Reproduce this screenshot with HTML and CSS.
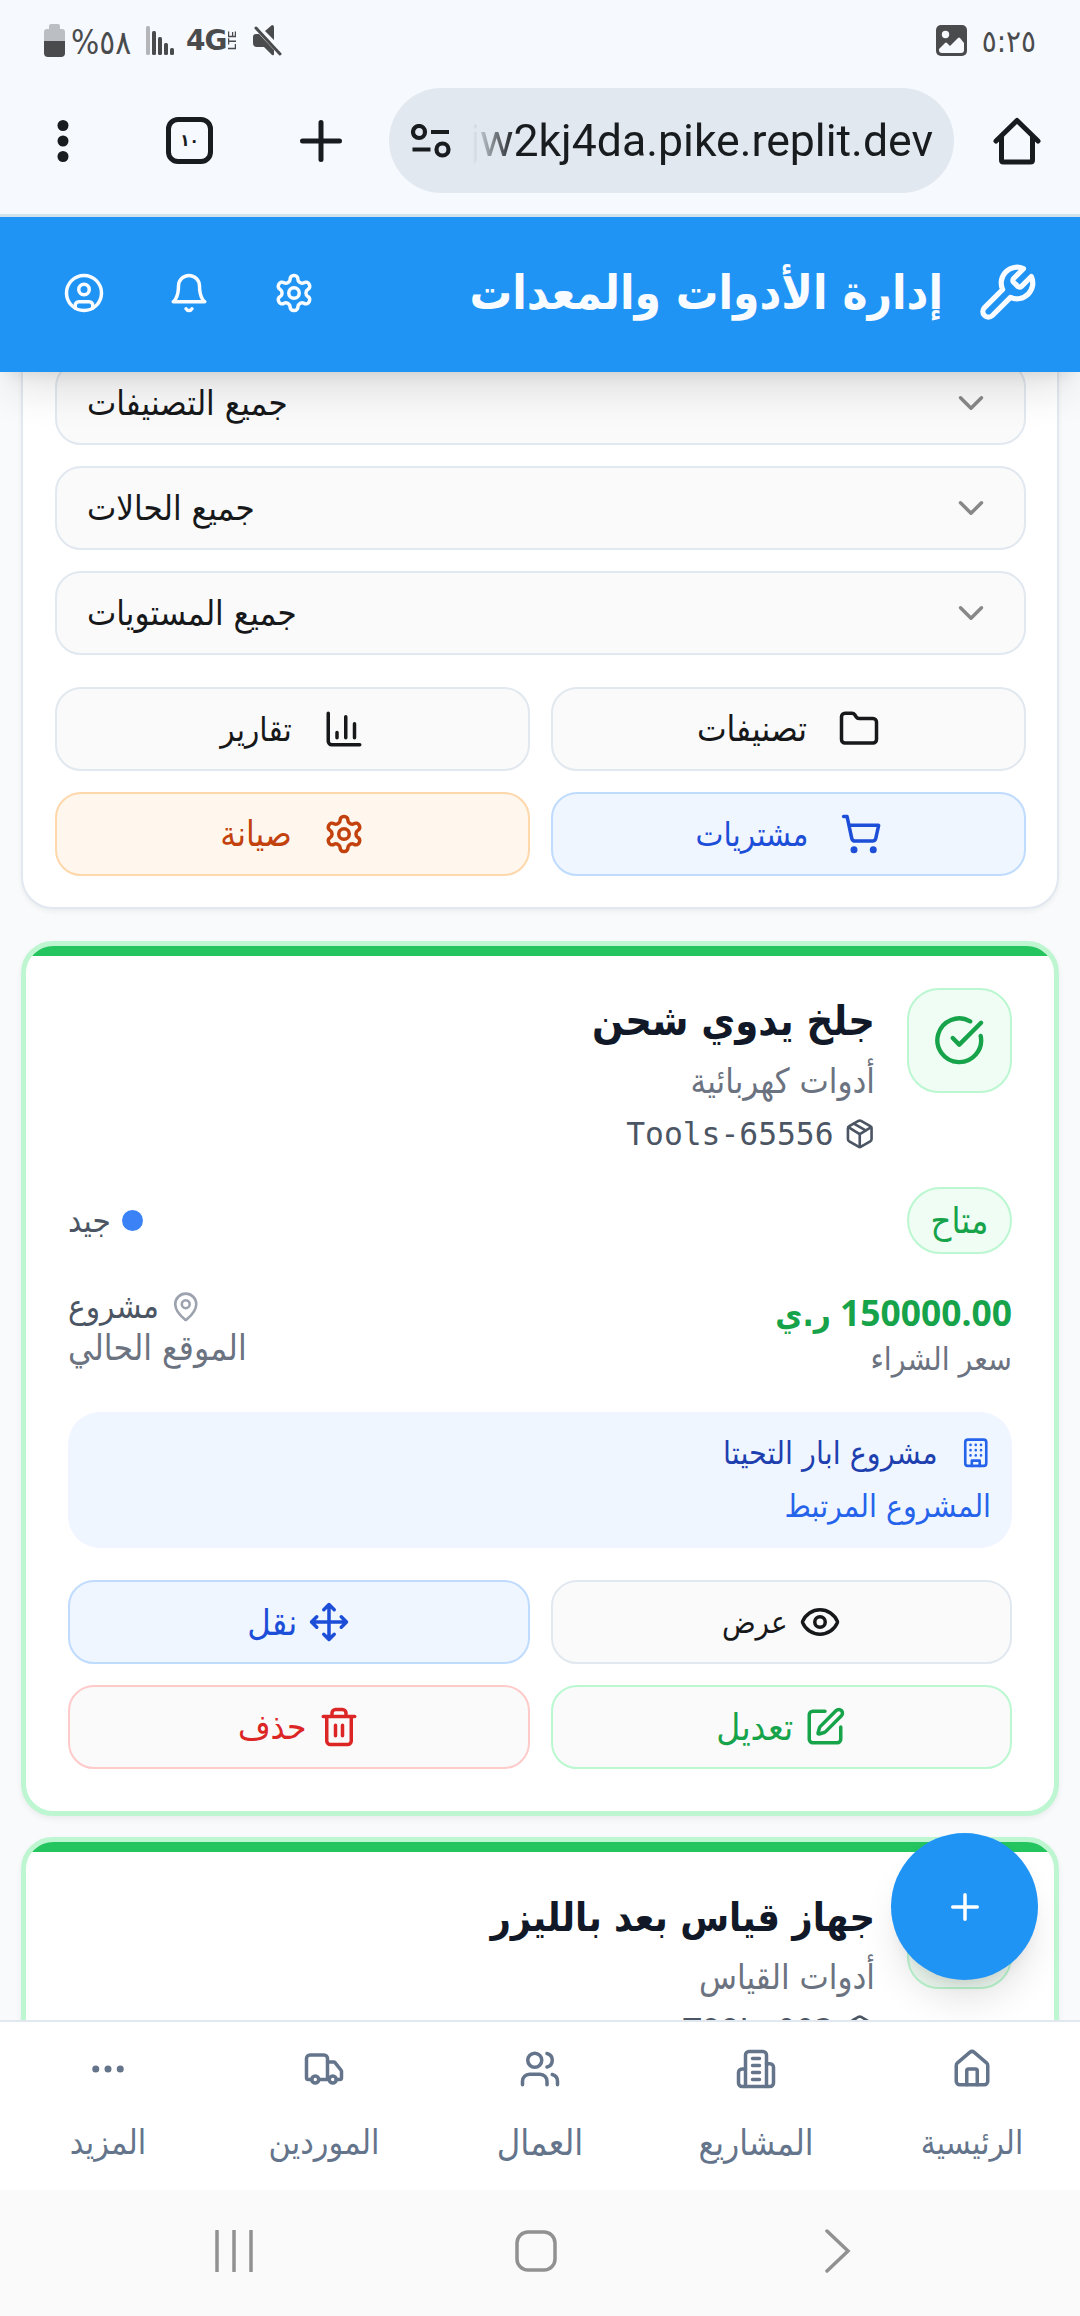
FILE: index.html
```html
<!DOCTYPE html>
<html lang="ar" dir="rtl">
<head>
<meta charset="utf-8">
<title>إدارة الأدوات والمعدات</title>
<link rel="stylesheet" href="styles.css">
</head>
<body>
<svg class="sprite" aria-hidden="true">
  <symbol id="wrench" viewBox="0 0 24 24"><path d="M14.7 6.3a1 1 0 0 0 0 1.4l1.6 1.6a1 1 0 0 0 1.4 0l3.77-3.77a6 6 0 0 1-7.94 7.94l-6.91 6.91a2.12 2.12 0 0 1-3-3l6.91-6.91a6 6 0 0 1 7.94-7.94l-3.76 3.76z"/></symbol>
  <symbol id="settings" viewBox="0 0 24 24"><path d="M12.22 2h-.44a2 2 0 0 0-2 2v.18a2 2 0 0 1-1 1.73l-.43.25a2 2 0 0 1-2 0l-.15-.08a2 2 0 0 0-2.73.73l-.22.38a2 2 0 0 0 .73 2.73l.15.1a2 2 0 0 1 1 1.72v.51a2 2 0 0 1-1 1.74l-.15.09a2 2 0 0 0-.73 2.73l.22.38a2 2 0 0 0 2.73.73l.15-.08a2 2 0 0 1 2 0l.43.25a2 2 0 0 1 1 1.73V20a2 2 0 0 0 2 2h.44a2 2 0 0 0 2-2v-.18a2 2 0 0 1 1-1.73l.43-.25a2 2 0 0 1 2 0l.15.08a2 2 0 0 0 2.73-.73l.22-.39a2 2 0 0 0-.73-2.73l-.15-.08a2 2 0 0 1-1-1.74v-.5a2 2 0 0 1 1-1.74l.15-.09a2 2 0 0 0 .73-2.73l-.22-.38a2 2 0 0 0-2.73-.73l-.15.08a2 2 0 0 1-2 0l-.43-.25a2 2 0 0 1-1-1.73V4a2 2 0 0 0-2-2z"/><circle cx="12" cy="12" r="3"/></symbol>
  <symbol id="bell" viewBox="0 0 24 24"><path d="M6 8a6 6 0 0 1 12 0c0 7 3 9 3 9H3s3-2 3-9"/><path d="M10.3 21a1.94 1.94 0 0 0 3.4 0"/></symbol>
  <symbol id="user" viewBox="0 0 24 24"><circle cx="12" cy="12" r="10"/><circle cx="12" cy="10" r="3"/><path d="M7 20.662V19a2 2 0 0 1 2-2h6a2 2 0 0 1 2 2v1.662"/></symbol>
  <symbol id="chevron" viewBox="0 0 24 24"><path d="m6 9 6 6 6-6"/></symbol>
  <symbol id="folder" viewBox="0 0 24 24"><path d="M20 20a2 2 0 0 0 2-2V8a2 2 0 0 0-2-2h-7.9a2 2 0 0 1-1.69-.9L9.6 3.9A2 2 0 0 0 7.93 3H4a2 2 0 0 0-2 2v13a2 2 0 0 0 2 2Z"/></symbol>
  <symbol id="chart" viewBox="0 0 24 24"><path d="M3 3v16a2 2 0 0 0 2 2h16M18 17V9M13 17V5M8 17v-3"/></symbol>
  <symbol id="cart" viewBox="0 0 24 24"><circle cx="8" cy="21" r="1"/><circle cx="19" cy="21" r="1"/><path d="M2.05 2.05h2l2.66 12.42a2 2 0 0 0 2 1.58h9.78a2 2 0 0 0 1.95-1.57l1.65-7.43H5.12"/></symbol>
  <symbol id="check" viewBox="0 0 24 24"><path d="M21.801 10A10 10 0 1 1 17 3.335"/><path d="m9 11 3 3L22 4"/></symbol>
  <symbol id="package" viewBox="0 0 24 24"><path d="M11 21.73a2 2 0 0 0 2 0l7-4A2 2 0 0 0 21 16V8a2 2 0 0 0-1-1.73l-7-4a2 2 0 0 0-2 0l-7 4A2 2 0 0 0 3 8v8a2 2 0 0 0 1 1.73z"/><path d="M12 22V12"/><path d="m3.3 7 7.703 4.734a2 2 0 0 0 1.994 0L20.7 7"/><path d="m7.5 4.27 9 5.15"/></symbol>
  <symbol id="pin" viewBox="0 0 24 24"><path d="M20 10c0 4.993-5.539 10.193-7.399 11.799a1 1 0 0 1-1.202 0C9.539 20.193 4 14.993 4 10a8 8 0 0 1 16 0"/><circle cx="12" cy="10" r="3"/></symbol>
  <symbol id="tower" viewBox="0 0 24 24"><rect width="16" height="20" x="4" y="2" rx="2"/><path d="M9 22v-4h6v4M8 6h.01M16 6h.01M12 6h.01M12 10h.01M12 14h.01M16 10h.01M16 14h.01M8 10h.01M8 14h.01"/></symbol>
  <symbol id="eye" viewBox="0 0 24 24"><path d="M2.062 12.348a1 1 0 0 1 0-.696 10.75 10.75 0 0 1 19.876 0 1 1 0 0 1 0 .696 10.75 10.75 0 0 1-19.876 0"/><circle cx="12" cy="12" r="3"/></symbol>
  <symbol id="edit" viewBox="0 0 24 24"><path d="M12 3H5a2 2 0 0 0-2 2v14a2 2 0 0 0 2 2h14a2 2 0 0 0 2-2v-7"/><path d="M18.375 2.625a1 1 0 0 1 3 3l-9.013 9.014a2 2 0 0 1-.853.505l-2.873.84a.5.5 0 0 1-.62-.62l.84-2.873a2 2 0 0 1 .506-.852z"/></symbol>
  <symbol id="move" viewBox="0 0 24 24"><path d="M12 2v20M2 12h20M15 19l-3 3-3-3M19 9l3 3-3 3M5 9l-3 3 3 3M9 5l3-3 3 3"/></symbol>
  <symbol id="trash" viewBox="0 0 24 24"><path d="M3 6h18M19 6v14c0 1-1 2-2 2H7c-1 0-2-1-2-2V6M8 6V4c0-1 1-2 2-2h4c1 0 2 1 2 2v2M10 11v6M14 11v6"/></symbol>
  <symbol id="house" viewBox="0 0 24 24"><path d="M15 21v-8a1 1 0 0 0-1-1h-4a1 1 0 0 0-1 1v8"/><path d="M3 10a2 2 0 0 1 .709-1.528l7-5.999a2 2 0 0 1 2.582 0l7 5.999A2 2 0 0 1 21 10v9a2 2 0 0 1-2 2H5a2 2 0 0 1-2-2z"/></symbol>
  <symbol id="building" viewBox="0 0 24 24"><path d="M6 22V4a2 2 0 0 1 2-2h8a2 2 0 0 1 2 2v18Z"/><path d="M6 12H4a2 2 0 0 0-2 2v6a2 2 0 0 0 2 2h2M18 9h2a2 2 0 0 1 2 2v9a2 2 0 0 1-2 2h-2M10 6h4M10 10h4M10 14h4M10 18h4"/></symbol>
  <symbol id="users" viewBox="0 0 24 24"><path d="M16 21v-2a4 4 0 0 0-4-4H6a4 4 0 0 0-4 4v2"/><circle cx="9" cy="7" r="4"/><path d="M22 21v-2a4 4 0 0 0-3-3.87M16 3.13a4 4 0 0 1 0 7.75"/></symbol>
  <symbol id="truck" viewBox="0 0 24 24"><path d="M14 18V6a2 2 0 0 0-2-2H4a2 2 0 0 0-2 2v11a1 1 0 0 0 1 1h2M15 18H9M19 18h2a1 1 0 0 0 1-1v-3.65a1 1 0 0 0-.22-.624l-3.48-4.35A1 1 0 0 0 17.52 8H14"/><circle cx="17" cy="18" r="2"/><circle cx="7" cy="18" r="2"/></symbol>
  <symbol id="more" viewBox="0 0 24 24"><circle cx="12" cy="12" r="1"/><circle cx="19" cy="12" r="1"/><circle cx="5" cy="12" r="1"/></symbol>
  <symbol id="plus" viewBox="0 0 24 24"><path d="M5 12h14M12 5v14"/></symbol>
</svg>

<div class="screen">
  <div class="status-bar" dir="ltr">
    <div class="status-group">
      <svg class="battery" viewBox="0 0 21 33"><path fill="#bbbec3" d="M5 2q0-2 2-2h7q2 0 2 2v3h2q3 0 3 3v9H0V8q0-3 3-3h2z"/><path fill="#4a4b4d" d="M0 17h21v12q0 4-4 4H4q-4 0-4-4z"/></svg>
      <span class="battery-level">%٥٨</span>
      <svg class="signal" viewBox="0 0 28 30"><rect width="4" height="29" rx="1.5" fill="#b4b6ba"/><g fill="#4a4b4d"><rect x="6" y="5" width="4" height="24" rx="1.5"/><rect x="12" y="11" width="4" height="18" rx="1.5"/><rect x="18" y="17" width="4" height="12" rx="1.5"/><rect x="24" y="22" width="4" height="7" rx="1.5"/></g></svg>
      <span class="network">4G</span><span class="lte">LTE</span>
      <svg class="mute" viewBox="0 0 30 31"><path fill="#4a4b4d" d="M0 12q0-3 3-3h3l15 16v4q0 2-2 1l-8-8H4q-4 0-4-4zM12 6l7-6q2 0 2 2v13z"/><path d="M3 3l24 26" stroke="#4a4b4d" stroke-width="3" stroke-linecap="round"/></svg>
    </div>
    <div class="status-group">
      <svg class="photo" viewBox="0 0 31 31"><rect width="31" height="31" rx="5" fill="#4a4b4d"/><circle cx="9.5" cy="9.500" r="3.700" fill="#f6f9fe"/><path fill="#f6f9fe" d="M3 24l6-6q1-1 2 0l3 3 8-8q1-1 2 0l4 5v7q0 3-3 3H6q-3 0-3-3z"/></svg>
      <span class="clock">٥:٢٥</span>
    </div>
  </div>

  <div class="toolbar" dir="ltr">
    <svg width="12" height="44" viewBox="0 0 12 44" fill="#191c1f"><circle cx="6" cy="6.500" r="5.500"/><circle cx="6" cy="22" r="5.500"/><circle cx="6" cy="37.500" r="5.500"/></svg>
    <div class="tabs">١٠</div>
    <svg width="42" height="42" viewBox="0 0 42 42" stroke="#191c1f" stroke-width="5" stroke-linecap="round"><path d="M2.500 21h37M21 2.500v37"/></svg>
    <div class="address">
      <svg width="40" height="34" viewBox="0 0 40 34" fill="none" stroke="#191c1f" stroke-width="4.200"><circle cx="8" cy="8" r="6"/><path d="M20 8h18M1.500 25.500h18"/><circle cx="31.500" cy="25.500" r="6"/></svg>
      <div class="url"><span>jw2kj4da.pike.replit.dev</span></div>
    </div>
    <svg width="48" height="48" viewBox="0 0 48 48" fill="none" stroke="#191c1f" stroke-width="5" stroke-linejoin="round" stroke-linecap="round"><path d="M3 24L24 3.500 45 24M8.500 20v23q0 2 2 2h27q2 0 2-2V20"/></svg>
  </div>

  <header class="app-header">
    <svg class="icon icon-xl"><use href="#wrench"/></svg>
    <h1>إدارة الأدوات والمعدات</h1>
    <nav class="header-actions">
      <svg class="icon"><use href="#settings"/></svg>
      <svg class="icon"><use href="#bell"/></svg>
      <svg class="icon"><use href="#user"/></svg>
    </nav>
  </header>

  <main class="content">
    <section class="filters">
      <div class="select"><svg class="icon"><use href="#chevron"/></svg><span>جميع التصنيفات</span></div>
      <div class="select"><svg class="icon"><use href="#chevron"/></svg><span>جميع الحالات</span></div>
      <div class="select"><svg class="icon"><use href="#chevron"/></svg><span>جميع المستويات</span></div>
      <div class="button-grid filter-buttons">
        <div class="btn"><svg class="icon"><use href="#folder"/></svg><span class="t35">تصنيفات</span></div>
        <div class="btn"><svg class="icon"><use href="#chart"/></svg><span class="t33">تقارير</span></div>
        <div class="btn btn-blue"><svg class="icon"><use href="#cart"/></svg><span class="t33">مشتريات</span></div>
        <div class="btn btn-orange"><svg class="icon"><use href="#settings"/></svg><span class="t35">صيانة</span></div>
      </div>
    </section>

    <article class="tool">
      <div class="stripe"></div>
      <div class="tool-body">
        <div class="tool-head">
          <div class="tool-icon"><svg class="icon icon-lg"><use href="#check"/></svg></div>
          <div>
            <h2>جلخ يدوي شحن</h2>
            <p class="category">أدوات كهربائية</p>
            <p class="sku"><svg class="icon icon-sm"><use href="#package"/></svg><span dir="ltr">Tools-65556</span></p>
          </div>
        </div>
        <div class="row status-row">
          <span class="badge">متاح</span>
          <span class="condition"><i class="dot"></i><span class="t33">جيد</span></span>
        </div>
        <div class="row details">
          <div>
            <p class="price"><bdi>150000.00</bdi> <span>ر.ي</span></p>
            <p class="caption t32">سعر الشراء</p>
          </div>
          <div class="place">
            <p class="place-name t33"><svg class="icon icon-sm"><use href="#pin"/></svg>مشروع</p>
            <p class="place-caption t35">الموقع الحالي</p>
          </div>
        </div>
        <div class="project">
          <p class="project-name"><svg class="icon icon-sm"><use href="#tower"/></svg>مشروع ابار التحيتا</p>
          <p class="project-caption">المشروع المرتبط</p>
        </div>
        <div class="button-grid actions">
          <div class="btn"><svg class="icon"><use href="#eye"/></svg><span class="t31">عرض</span></div>
          <div class="btn btn-blue"><svg class="icon"><use href="#move"/></svg><span class="t36">نقل</span></div>
          <div class="btn btn-green"><svg class="icon"><use href="#edit"/></svg><span class="t37">تعديل</span></div>
          <div class="btn btn-red"><svg class="icon"><use href="#trash"/></svg><span class="t35">حذف</span></div>
        </div>
      </div>
    </article>

    <article class="tool">
      <div class="stripe"></div>
      <div class="tool-body">
        <div class="tool-head">
          <div class="tool-icon"><svg class="icon icon-lg"><use href="#check"/></svg></div>
          <div>
            <h2 class="long">جهاز قياس بعد بالليزر</h2>
            <p class="category">أدوات القياس</p>
            <p class="sku"><svg class="icon icon-sm"><use href="#package"/></svg><span dir="ltr">TOOL-002</span></p>
          </div>
        </div>
      </div>
    </article>
  </main>

  <nav class="bottom-nav">
    <div class="tab"><svg class="icon"><use href="#house"/></svg><span class="t33">الرئيسية</span></div>
    <div class="tab"><svg class="icon"><use href="#building"/></svg><span class="t35">المشاريع</span></div>
    <div class="tab"><svg class="icon"><use href="#users"/></svg><span class="t36">العمال</span></div>
    <div class="tab"><svg class="icon"><use href="#truck"/></svg><span class="t34">الموردين</span></div>
    <div class="tab"><svg class="icon"><use href="#more"/></svg><span class="t34">المزيد</span></div>
  </nav>

  <div class="system-bar" dir="ltr">
    <svg width="38" height="42" viewBox="0 0 38 42"><path d="M2 1v40M19 1v40M36 1v40"/></svg>
    <svg width="42" height="42" viewBox="0 0 42 42"><rect x="2" y="2" width="38" height="38" rx="11"/></svg>
    <svg width="26" height="44" viewBox="0 0 26 44"><path d="M2 2l21 20L2 42"/></svg>
  </div>

  <div class="fab"><svg class="icon"><use href="#plus"/></svg></div>
</div>
</body>
</html>
```
FILE: styles.css
```css
* { box-sizing: border-box; margin: 0; padding: 0; }
body { width: 1080px; height: 2316px; overflow: hidden; background: #f8fafc; font-family: "DejaVu Sans Condensed", "DejaVu Sans", sans-serif; font-stretch: condensed; }
.sprite { position: absolute; width: 0; height: 0; }
.screen { position: relative; display: flex; flex-direction: column; width: 1080px; height: 2316px; overflow: hidden; }

.icon { width: 42px; height: 42px; flex: none; fill: none; stroke: currentColor; stroke-width: 2; stroke-linecap: round; stroke-linejoin: round; }
.icon-sm { width: 31.5px; height: 31.5px; }
.icon-lg { width: 52.5px; height: 52.5px; }
.icon-xl { width: 63px; height: 63px; }

/* Browser chrome */
.status-bar { display: flex; justify-content: space-between; height: 84px; padding: 0 44px; background: #f6f9fe; color: #4a4b4d; }
.status-group { display: flex; align-items: center; white-space: nowrap; }
.battery { width: 21px; height: 33px; margin-right: 6px; margin-top: -3px; }
.battery-level { width: 60px; font-size: 33px; }
.signal { width: 28px; height: 30px; margin: -2px 12px 0 15px; }
.network { width: 41px; font: bold 28px/30px "DejaVu Sans", sans-serif; font-stretch: normal; letter-spacing: -1px; margin-top: -3px; }
.lte { font: bold 10.500px/10px "Liberation Sans", sans-serif; writing-mode: vertical-rl; transform: rotate(180deg); margin-top: -3px; }
.mute { width: 30px; height: 31px; margin: -4px 0 0 16px; }
.photo { width: 31px; height: 31px; margin: -3px 15px 0 0; }
.clock { font-size: 31px; margin-top: -3px; }

.toolbar { display: grid; grid-template-columns: 126px 127px 136px 565px 126px; align-items: center; justify-items: center; height: 133px; padding-bottom: 17px; border-bottom: 3px solid #d3e3ec; background: #f6f9fe; }
.tabs { display: flex; align-items: center; justify-content: center; width: 47px; height: 47px; padding-bottom: 2px; border: 5px solid #191c1f; border-radius: 12px; color: #191c1f; font-size: 17px; font-weight: bold; }
.address { display: flex; align-items: center; gap: 22px; width: 565px; height: 105px; padding: 0 21px 0 22px; border-radius: 53px; background: #e1e8f0; }
.url { display: flex; justify-content: flex-end; flex: 1; overflow: hidden; color: #191c1f; font: 44.600px/60px Roboto, sans-serif; white-space: nowrap; mask-image: linear-gradient(90deg, transparent, #000 42px); }

/* App header */
.app-header { position: relative; z-index: 2; display: flex; align-items: center; height: 155px; flex: none; padding: 0 42px 3px 42px; background: #2094f5; color: #f8fbff; box-shadow: 0 26px 39px -8px rgba(0,0,0,.11), 0 10px 16px -10px rgba(0,0,0,.11); }
.app-header h1 { margin-right: 32px; font-size: 47.300px; line-height: 70px; font-weight: bold; }
.header-actions { display: flex; gap: 63px; margin-right: auto; padding-left: 21px; }

/* Content */
.content { flex: 1; min-height: 0; overflow: hidden; padding: 0 21px; font-size: 34.600px; }
.filters { display: flex; flex-direction: column; gap: 21px; margin-top: -44px; padding: 31px 31px 31px 32px; border: 2px solid #e2e8f0; border-radius: 32px; background: #fff; box-shadow: 0 3px 5px rgba(0,0,0,.05); }
.select { display: flex; align-items: center; justify-content: space-between; height: 84px; padding: 0 32px 0 30px; border: 2px solid #e2e8f0; border-radius: 26px; background: #fafafa; color: #17181a; }
.select .icon { color: #888; }
.button-grid { display: grid; grid-template-columns: 1fr 1fr; gap: 21px; }
.filter-buttons { margin-top: 11px; }
.btn { display: flex; align-items: center; justify-content: center; gap: 31px; height: 84px; border: 2px solid #e2e8f0; border-radius: 26px; background: #fafafa; color: #17181a; }
.btn-blue { background: #eff6ff; border-color: #bfdbfe; color: #1d4ed8; }
.btn-orange { background: #fff7ed; border-color: #fed7aa; color: #c2410c; }
.btn-green { border-color: #bbf7d0; color: #16a34a; }
.btn-red { border-color: #fecaca; color: #dc2626; }

.tool { margin-top: 21px; border: 5px solid #bef6d2; border-radius: 32px; overflow: hidden; background: #fff; box-shadow: 0 3px 6px rgba(0,0,0,.06); }
.filters + .tool { margin-top: 32px; }
.stripe { height: 10px; background: #24c55e; }
.tool-body { padding: 32px 42px 42px; }
.tool-head { display: flex; gap: 32px; }
.tool-icon { display: flex; align-items: center; justify-content: center; width: 105px; height: 105px; border: 2px solid #bbf7d0; border-radius: 32px; background: #f0fdf4; color: #16a34a; }
.tool h2 { color: #111827; font-size: 41.200px; line-height: 66px; font-weight: bold; }
.tool h2.long { font-size: 39.400px; }
.category { color: #6b7280; line-height: 54px; }
.sku { display: flex; align-items: center; gap: 10px; height: 52px; color: #4b5563; font: 31.3px/52px "DejaVu Sans Mono", monospace; }
.row { display: flex; justify-content: space-between; }
.status-row { align-items: center; height: 67px; margin-top: 27px; }
.badge { display: flex; align-items: center; justify-content: center; width: 105px; height: 67px; border: 2px solid #bbf7d0; border-radius: 34px; background: #f0fdf4; color: #16a34a; font-size: 36px; }
.condition { display: flex; align-items: center; gap: 11px; color: #4b5563; }
.dot { width: 21px; height: 21px; border-radius: 50%; background: #3b82f6; }
.details { height: 97px; margin-top: 32px; }
.price { height: 50px; color: #16a34a; font: bold 35.400px/52px "Noto Sans", sans-serif; }
.price span { font: bold 33px/52px "DejaVu Sans Condensed", sans-serif; }
.caption { color: #6b7280; line-height: 47px; }
.place { display: flex; flex-direction: column; align-items: flex-end; }
.place-name { display: flex; align-items: center; gap: 11px; color: #4b5563; line-height: 42px; }
.place-name .icon { color: #9ca3af; }
.place-caption { color: #6b7280; line-height: 40px; }
.project { margin-top: 29px; height: 136px; padding: 21px; border-radius: 32px; background: #eff6ff; }
.project-name { display: flex; align-items: center; gap: 22px; height: 40px; color: #1e40af; font-size: 31.900px; line-height: 40px; }
.project-name .icon { color: #2563eb; }
.project-caption { margin-top: 12px; color: #2563eb; font-size: 31.700px; line-height: 42px; }
.actions { margin-top: 32px; }
.actions .btn { gap: 11px; }

.t31 { font-size: 31px; }
.t32 { font-size: 31.700px; }
.t33 { font-size: 33px; }
.t34 { font-size: 33.800px; }
.t35 { font-size: 35px; }
.t36 { font-size: 36px; }
.t37 { font-size: 36.800px; }

/* Bottom navigation */
.bottom-nav { position: relative; z-index: 2; display: grid; grid-template-columns: repeat(5, 1fr); height: 170px; flex: none; border-top: 2px solid #e2e8f0; background: #fff; color: #64748b; }
.tab { display: flex; flex-direction: column; align-items: center; gap: 28px; padding-top: 26px; line-height: 50px; }

.system-bar { display: grid; grid-template-columns: repeat(3, 302px); align-items: center; justify-items: center; height: 126px; flex: none; padding: 0 90px 4px 83px; background: #fafafa; }
.system-bar svg { fill: none; stroke: #919191; stroke-width: 3.5; stroke-linecap: round; }

.fab { position: absolute; z-index: 1; left: 891px; top: 1833px; display: flex; align-items: center; justify-content: center; width: 147px; height: 147px; border-radius: 50%; background: #2094f5; color: #fff; box-shadow: 0 26px 39px -8px rgba(0,0,0,.12), 0 10px 16px -10px rgba(0,0,0,.12); }
```
